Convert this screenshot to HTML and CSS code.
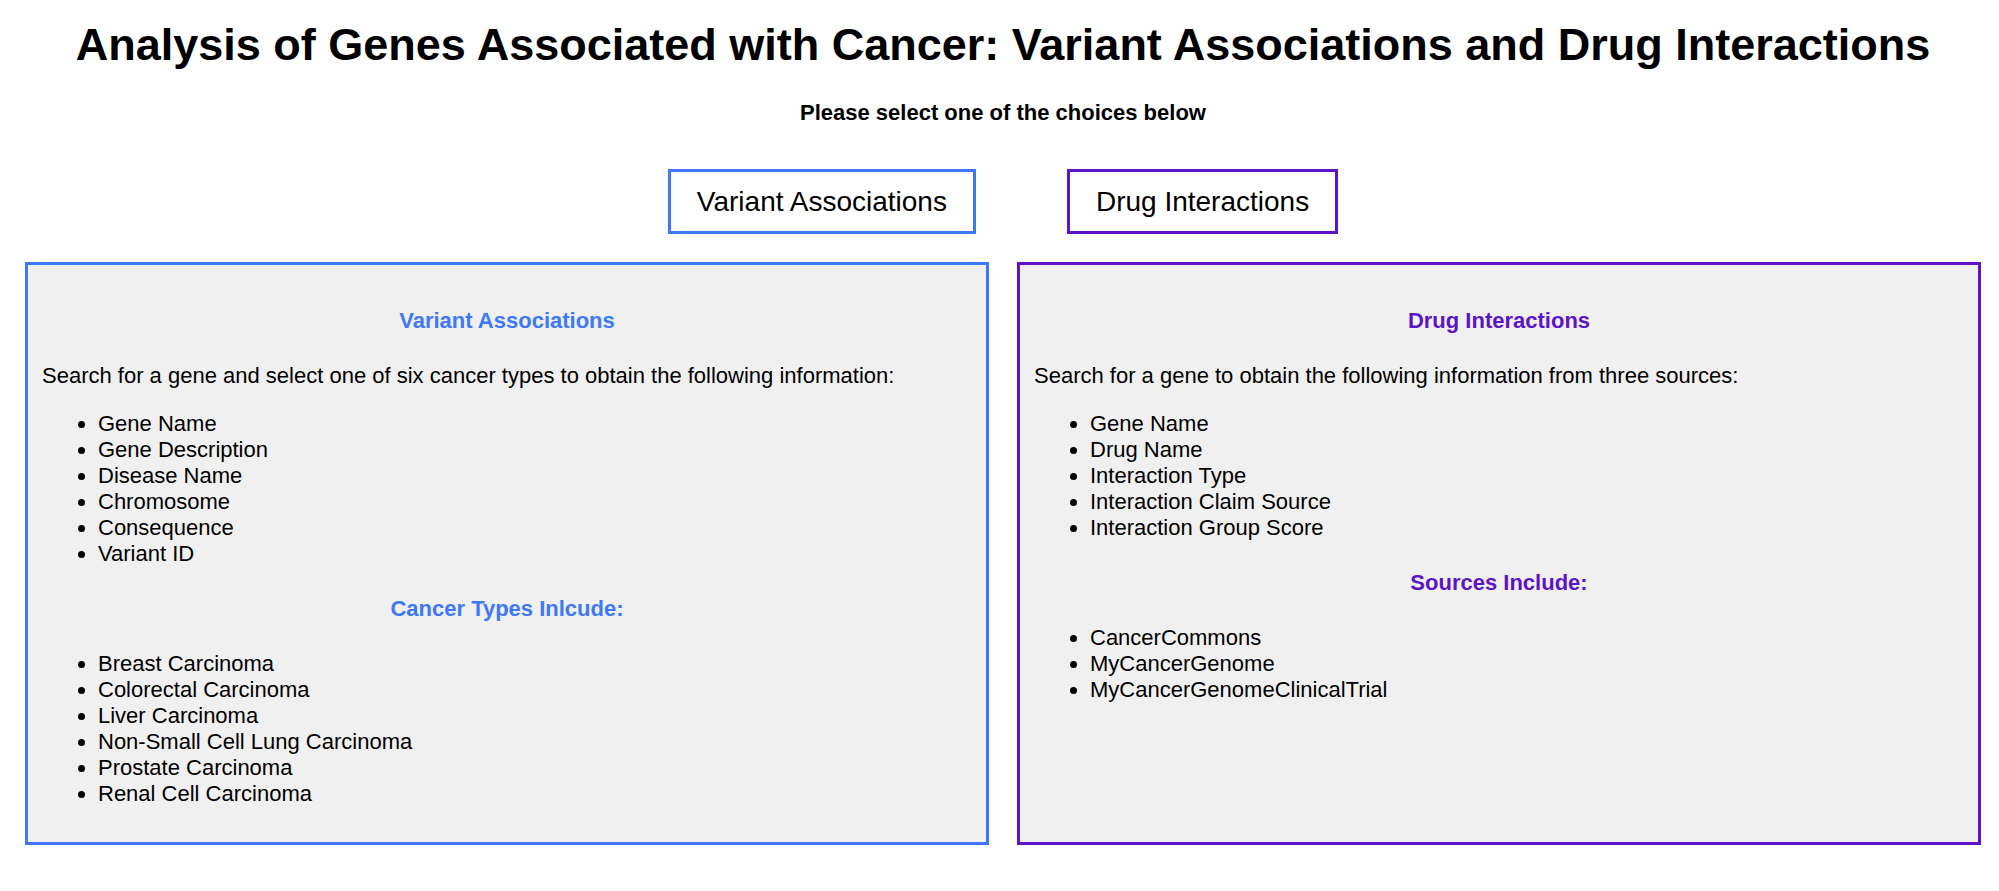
FILE: index.html
```html
<!DOCTYPE html>
<html lang="en">
<head>
<meta charset="utf-8">
<title>Analysis of Genes Associated with Cancer</title>
<link rel="stylesheet" href="styles.css">
</head>
<body>
<header class="header">
  <h1 class="title">Analysis of Genes Associated with Cancer: Variant Associations and Drug Interactions</h1>
  <p class="prompt">Please select one of the choices below</p>
</header>
<nav class="choices">
  <button type="button" class="choice variant">Variant Associations</button>
  <button type="button" class="choice drug">Drug Interactions</button>
</nav>
<main class="panels">
  <section class="panel variant">
    <h2 class="heading">Variant Associations</h2>
    <p class="intro">Search for a gene and select one of six cancer types to obtain the following information:</p>
    <ul class="list">
      <li>Gene Name</li>
      <li>Gene Description</li>
      <li>Disease Name</li>
      <li>Chromosome</li>
      <li>Consequence</li>
      <li>Variant ID</li>
    </ul>
    <h2 class="heading">Cancer Types Inlcude:</h2>
    <ul class="list">
      <li>Breast Carcinoma</li>
      <li>Colorectal Carcinoma</li>
      <li>Liver Carcinoma</li>
      <li>Non-Small Cell Lung Carcinoma</li>
      <li>Prostate Carcinoma</li>
      <li>Renal Cell Carcinoma</li>
    </ul>
  </section>
  <section class="panel drug">
    <h2 class="heading">Drug Interactions</h2>
    <p class="intro">Search for a gene to obtain the following information from three sources:</p>
    <ul class="list">
      <li>Gene Name</li>
      <li>Drug Name</li>
      <li>Interaction Type</li>
      <li>Interaction Claim Source</li>
      <li>Interaction Group Score</li>
    </ul>
    <h2 class="heading">Sources Include:</h2>
    <ul class="list">
      <li>CancerCommons</li>
      <li>MyCancerGenome</li>
      <li>MyCancerGenomeClinicalTrial</li>
    </ul>
  </section>
</main>
</body>
</html>
```
FILE: styles.css
```css
body {
  margin: 0;
  padding: 18px 18px 46px 25px;
  background: #fefefe;
  color: #000;
  font-family: "Liberation Sans", Arial, sans-serif;
  font-size: 22px;
  line-height: 26px;
}

.variant {
  --accent: #3e78f6;
}

.drug {
  --accent: #5c14c6;
}

.header {
  text-align: center;
}

.title {
  margin: 0;
  font-size: 45px;
  line-height: 53px;
}

.prompt {
  margin: 29px 0 0;
  font-weight: bold;
}

.choices {
  display: flex;
  justify-content: center;
  gap: 91px;
  margin: 43px 0 28px;
}

.choice {
  padding: 14px 26px;
  border: 3px solid var(--accent);
  background: #fff;
  color: #000;
  font: inherit;
  font-size: 28px;
  line-height: 31px;
}

.panels {
  display: grid;
  grid-template-columns: 1fr 1fr;
  gap: 28px;
}

.panel {
  padding: 43px 14px 35px;
  border: 3px solid var(--accent);
  background: #f0f0f0;
}

.heading {
  margin: 0 0 29px;
  color: var(--accent);
  font-size: 22px;
  text-align: center;
}

.intro {
  margin: 0 0 22px;
}

.list {
  margin: 0;
  padding-left: 56px;
}

.list + .heading {
  margin-top: 29px;
}
```
